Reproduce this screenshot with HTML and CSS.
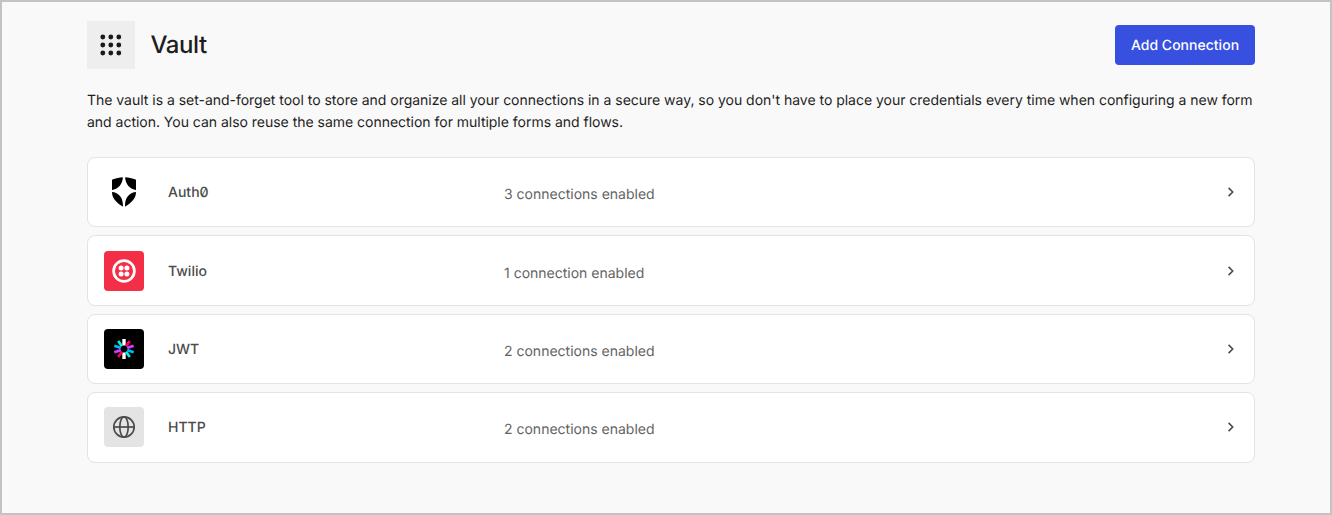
FILE: index.html
```
<!DOCTYPE html>
<html lang="en">
<head>
<meta charset="utf-8">
<title>Vault</title>
<link rel="stylesheet" href="styles.css">
</head>
<body>
<main class="page">
  <header class="header">
    <div class="header-icon">
      <svg width="24" height="24" viewBox="0 0 24 24" fill="#1a1a1a">
        <circle cx="3.800" cy="4" r="2.400"/><circle cx="11.800" cy="4" r="2.400"/><circle cx="19.800" cy="4" r="2.400"/>
        <circle cx="3.800" cy="12" r="2.400"/><circle cx="11.800" cy="12" r="2.400"/><circle cx="19.800" cy="12" r="2.400"/>
        <circle cx="3.800" cy="20" r="2.400"/><circle cx="11.800" cy="20" r="2.400"/><circle cx="19.800" cy="20" r="2.400"/>
      </svg>
    </div>
    <h1 class="title">Vault</h1>
    <button class="add-button">Add Connection</button>
  </header>
  <p class="intro">The vault is a set-and-forget tool to store and organize all your connections in a secure way, so you don't have to place your credentials every time when configuring a new form and action. You can also reuse the same connection for multiple forms and flows.</p>
  <ul class="list">
    <li class="row">
      <span class="logo">
        <svg width="40" height="40" viewBox="0 0 40 40">
          <path d="M8 8.100Q8 7.500 9 7.200Q13.600 5.600 18.100 5.200Q19 5.200 18.900 6C18 12.500 14.500 16.700 8.500 17.900Q8 18 8 17.400ZM32 8.100Q32 7.500 31 7.200Q26.400 5.600 21.900 5.200Q21 5.200 21.100 6C22 12.500 25.500 16.700 31.500 17.900Q32 18 32 17.400ZM8 20.500Q8 19.900 8.700 20C15 21.100 18.900 25.500 19 33.800Q19 34.800 18.200 34.300C12 30.200 8.200 26 8 20.500ZM32 20.500Q32 19.900 31.300 20C25 21.100 21.100 25.500 21 33.800Q21 34.800 21.800 34.300C28 30.200 31.800 26 32 20.500Z" fill="#000"/>
        </svg>
      </span>
      <span class="name">Auth0</span>
      <span class="count">3 connections enabled</span>
      <svg class="chevron" width="16" height="16" viewBox="0 0 16 16"><path d="M5.600 3.900l4.100 4.100-4.100 4.100"/></svg>
    </li>
    <li class="row row-tall">
      <span class="logo logo-twilio">
        <svg width="40" height="40" viewBox="0 0 40 40">
          <circle cx="20" cy="20" r="10.400" fill="none" stroke="#fff" stroke-width="2.700"/>
          <g fill="#fff"><circle cx="17.100" cy="17.100" r="2.500"/><circle cx="22.900" cy="17.100" r="2.500"/><circle cx="17.100" cy="22.900" r="2.500"/><circle cx="22.900" cy="22.900" r="2.500"/></g>
        </svg>
      </span>
      <span class="name">Twilio</span>
      <span class="count">1 connection enabled</span>
      <svg class="chevron" width="16" height="16" viewBox="0 0 16 16"><path d="M5.600 3.900l4.100 4.100-4.100 4.100"/></svg>
    </li>
    <li class="row">
      <span class="logo logo-jwt">
        <svg width="40" height="40" viewBox="0 0 40 40" stroke-width="2.700">
          <g stroke="#fff" stroke-width="3.400"><path d="M20 10v6.500"/><path d="M20 23.500v6.500"/></g>
          <g stroke="#fb015b"><path d="M22 17.200L25.800 12"/><path d="M18 22.800L14.200 28"/></g>
          <g stroke="#d63aff"><path d="M23.200 18.900L29.700 16.800"/><path d="M16.800 21.100L10.300 23.200"/></g>
          <g stroke="#00b9f1"><path d="M23.200 21.100L29.700 23.200"/><path d="M16.800 18.900L10.300 16.800"/></g>
          <g stroke="#00f2e6"><path d="M22 22.800L25.800 28"/><path d="M18 17.200L14.200 12"/></g>
        </svg>
      </span>
      <span class="name">JWT</span>
      <span class="count">2 connections enabled</span>
      <svg class="chevron" width="16" height="16" viewBox="0 0 16 16"><path d="M5.600 3.900l4.100 4.100-4.100 4.100"/></svg>
    </li>
    <li class="row row-tall row-last">
      <span class="logo logo-http">
        <svg width="40" height="40" viewBox="0 0 40 40" fill="none" stroke="#4b4b4b" stroke-width="1.700">
          <circle cx="20" cy="20" r="10.200"/>
          <ellipse cx="20" cy="20" rx="4.200" ry="10.200"/>
          <path d="M9.800 20h20.400"/>
        </svg>
      </span>
      <span class="name">HTTP</span>
      <span class="count">2 connections enabled</span>
      <svg class="chevron" width="16" height="16" viewBox="0 0 16 16"><path d="M5.600 3.900l4.100 4.100-4.100 4.100"/></svg>
    </li>
  </ul>
</main>
</body>
</html>
```
FILE: styles.css
```
* { box-sizing: border-box; }

body {
  margin: 0;
  font-family: Inter, "Liberation Sans", sans-serif;
  color: #1e1e1e;
  text-rendering: geometricPrecision;
}

.page {
  height: 515px;
  padding: 19px 75px 0 85px;
  border: 2px solid #c3c3c3;
  background: #f9f9f9;
}

.header {
  display: flex;
  align-items: center;
  height: 48px;
}

.header-icon {
  display: flex;
  align-items: center;
  justify-content: center;
  width: 48px;
  height: 48px;
  background: #eee;
}

.title {
  margin: 0 auto 0 15.500px;
  font-size: 24px;
  font-weight: 500;
  line-height: 32px;
  letter-spacing: -0.400px;
}

.add-button {
  width: 140px;
  height: 40px;
  padding: 2px 0 0;
  border: 0;
  border-radius: 4px;
  background: #3750e0;
  color: #fff;
  font: 500 14px/20px Inter, sans-serif;
  letter-spacing: 0.020px;
  text-rendering: inherit;
}

.intro {
  margin: 21px 0 0;
  font-size: 14px;
  line-height: 22px;
  letter-spacing: -0.020px;
}

.list {
  display: flex;
  flex-direction: column;
  gap: 8px;
  margin: 23px 0 0;
  padding: 0;
  list-style: none;
}

.row {
  display: flex;
  align-items: center;
  height: 70px;
  padding: 0 15px 0 16px;
  border: 1px solid #e3e3e3;
  border-radius: 8px;
  background: #fff;
}

.row-tall {
  height: 71px;
}

.row-last {
  padding-bottom: 1px;
}

.logo {
  width: 40px;
  height: 40px;
  border-radius: 4px;
}

.logo svg {
  display: block;
}

.logo-twilio { background: #f22f46; }
.logo-jwt { background: #000; }
.logo-http { background: #e4e4e4; }

.name {
  width: 336px;
  margin-left: 24px;
  padding-top: 2px;
  font-size: 14px;
  font-weight: 500;
  line-height: 20px;
  font-feature-settings: "zero";
  color: #4b4b4b;
}

.count {
  margin-right: auto;
  padding-top: 6px;
  font-size: 14px;
  line-height: 20px;
  color: #636363;
}

.chevron {
  fill: none;
  stroke: #4b4b4b;
  stroke-width: 1.600;
}
```
